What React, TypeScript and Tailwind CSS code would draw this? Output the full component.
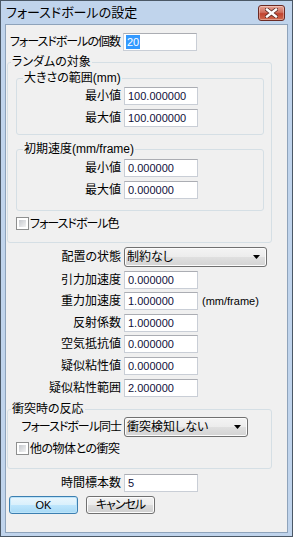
import React from "react";

const ui = "font-['Liberation_Sans','Noto_Sans_CJK_JP',sans-serif] [font-feature-settings:'palt']";

type FieldProps = { value: string; selected?: boolean };

const Field = ({ value, selected }: FieldProps) => (
    <div className="h-[18px] w-[74px] shrink-0 bg-white border border-[#c9ced6] border-t-[#abadb3] flex items-center pl-[2px] text-[11px] text-[#10103a] leading-none">
        {selected ? (
            <span className="bg-[#3399ff] text-white px-[1px] h-[14px] flex items-center">{value}</span>
        ) : (
            <span className="pl-[1px]">{value}</span>
        )}
    </div>
);

type RowProps = { label: string; w: string; children: React.ReactNode; className?: string; tight?: boolean };

const Row = ({ label, w, children, className, tight }: RowProps) => (
    <div className={`flex items-center ${className ?? ""}`}>
        <div className={`${w} flex justify-end whitespace-nowrap text-[12px] leading-none shrink-0 ${tight ? "tracking-[-1px]" : ""}`}>{label}</div>
        <div className="ml-[3px] flex items-center">{children}</div>
    </div>
);

const Combo = ({ value, w }: { value: string; w: string }) => (
    <div className={`${w} h-[20px] rounded-[3px] border border-[#707070] bg-[linear-gradient(#f4f4f4,#ececec_50%,#e0e0e0_50%,#d3d3d3)] flex items-center justify-between pl-[2px] pr-[6px] shadow-[inset_0_0_0_1px_#fcfcfc]`}>
        <span className="text-[12px] leading-none whitespace-nowrap">{value}</span>
        <svg width="7" height="4" viewBox="0 0 7 4">
            <path d="M0 0h7L3.5 4z" fill="#000" />
        </svg>
    </div>
);

const Check = ({ label, className, tight }: { label: string; className?: string; tight?: boolean }) => (
    <div className={`flex items-center ${className ?? ""}`}>
        <div className="w-[13px] h-[13px] border border-[#8e8f8f] bg-white p-[2px] shrink-0">
            <div className="w-full h-full bg-linear-to-br from-[#c6c9ce] to-[#f3f3f3]" />
        </div>
        <span className={`ml-[1px] text-[12px] leading-none whitespace-nowrap ${tight ? "tracking-[-1px]" : "tracking-[-0.5px]"}`}>{label}</span>
    </div>
);

const Group = ({ title, className, legendMl, children }: { title: string; className: string; legendMl: string; children: React.ReactNode }) => (
    <fieldset className={`border border-[#d5dfe5] rounded-[3px] ${className}`}>
        <legend className={`${legendMl} px-[1px] text-[12px] leading-[16px] whitespace-nowrap`}>{title}</legend>
        {children}
    </fieldset>
);

const App = () => {
    return (
        <div className={`w-[293px] h-[537px] border border-[#4b5866] bg-[#c0d4ec] flex flex-col px-[4px] pb-[3px] text-black ${ui}`}>
            {/* title bar */}
            <div className="h-[23px] flex items-center justify-between shrink-0">
                <span className="pl-[1px] text-[13px] leading-none text-black whitespace-nowrap">フォースドボールの設定</span>
                <div className="mr-[3px] w-[27px] h-[16px] rounded-[3px] border border-[#6b2a24] bg-[linear-gradient(#e7a395,#d0705f_45%,#c1432f_55%,#cf6a4f)] flex items-center justify-center shadow-[inset_0_0_0_1px_rgba(255,255,255,0.35)]">
                    <svg width="13" height="10" viewBox="0 0 13 10">
                        <path d="M2 1.5l9 7M11 1.5l-9 7" stroke="#5a2a24" strokeWidth="4" strokeLinecap="square" />
                        <path d="M2 1.5l9 7M11 1.5l-9 7" stroke="#fff" strokeWidth="2.4" strokeLinecap="square" />
                    </svg>
                </div>
            </div>

            {/* client */}
            <div className="flex-1 border border-[#8ea3bb] bg-[#f0f0f0] flex flex-col">
                <Row label="フォースドボールの個数" w="w-[114px]" className="mt-[8px]" tight>
                    <Field value="20" selected />
                </Row>

                <Group title="ランダムの対象" className="ml-[1px] w-[265px] mt-[3px] pb-[12px]" legendMl="ml-[3px]">
                    <Group title="大きさの範囲(mm)" className="ml-[8px] w-[248px] pb-[7px]" legendMl="ml-[6px]">
                        <Row label="最小値" w="w-[104px]" className="mt-[1px]">
                            <Field value="100.000000" />
                        </Row>
                        <Row label="最大値" w="w-[104px]" className="mt-[4px]">
                            <Field value="100.000000" />
                        </Row>
                    </Group>
                    <Group title="初期速度(mm/frame)" className="ml-[8px] w-[248px] mt-[6px] pb-[11px]" legendMl="ml-[6px]">
                        <Row label="最小値" w="w-[104px]" className="mt-[2px]">
                            <Field value="0.000000" />
                        </Row>
                        <Row label="最大値" w="w-[104px]" className="mt-[4px]">
                            <Field value="0.000000" />
                        </Row>
                    </Group>
                    <Check label="フォースドボール色" className="ml-[8px] mt-[6px]" tight />
                </Group>

                <Row label="配置の状態" w="w-[115px]" className="mt-[4px]">
                    <Combo value="制約なし" w="w-[143px]" />
                </Row>
                <Row label="引力加速度" w="w-[115px]" className="mt-[4px]">
                    <Field value="0.000000" />
                </Row>
                <Row label="重力加速度" w="w-[115px]" className="mt-[3px]">
                    <Field value="1.000000" />
                    <span className="ml-[4px] text-[11px] leading-none">(mm/frame)</span>
                </Row>
                <Row label="反射係数" w="w-[115px]" className="mt-[4px]">
                    <Field value="1.000000" />
                </Row>
                <Row label="空気抵抗値" w="w-[115px]" className="mt-[3px]">
                    <Field value="0.000000" />
                </Row>
                <Row label="疑似粘性値" w="w-[115px]" className="mt-[4px]">
                    <Field value="0.000000" />
                </Row>
                <Row label="疑似粘性範囲" w="w-[115px]" className="mt-[4px]">
                    <Field value="2.000000" />
                </Row>

                <Group title="衝突時の反応" className="ml-[1px] w-[265px] mt-[4px] pb-[13px]" legendMl="ml-[3px]">
                    <Row label="フォースドボール同士" w="w-[113px]" tight>
                        <Combo value="衝突検知しない" w="w-[124px]" />
                    </Row>
                    <Check label="他の物体との衝突" className="ml-[8px] mt-[5px]" />
                </Group>

                <Row label="時間標本数" w="w-[115px]" className="mt-[5px]">
                    <Field value="5" />
                </Row>

                <div className="flex items-center mt-[4px] ml-[3px] gap-[8px]">
                    <div className="w-[69px] h-[18px] rounded-[3px] border border-[#3c7fb1] bg-[linear-gradient(#eaf6fd,#d9f0fc_50%,#bee6fd_50%,#a7d9f5)] shadow-[inset_0_0_0_1px_#bde4f9] flex items-center justify-center text-[11px] leading-none">
                        OK
                    </div>
                    <div className="w-[69px] h-[18px] rounded-[3px] border border-[#707070] bg-[linear-gradient(#f2f2f2,#ebebeb_50%,#dddddd_50%,#cfcfcf)] shadow-[inset_0_0_0_1px_#fcfcfc] flex items-center justify-center text-[12px] leading-none tracking-[-1px]">
                        キャンセル
                    </div>
                </div>
            </div>
        </div>
    );
};

export default App;
